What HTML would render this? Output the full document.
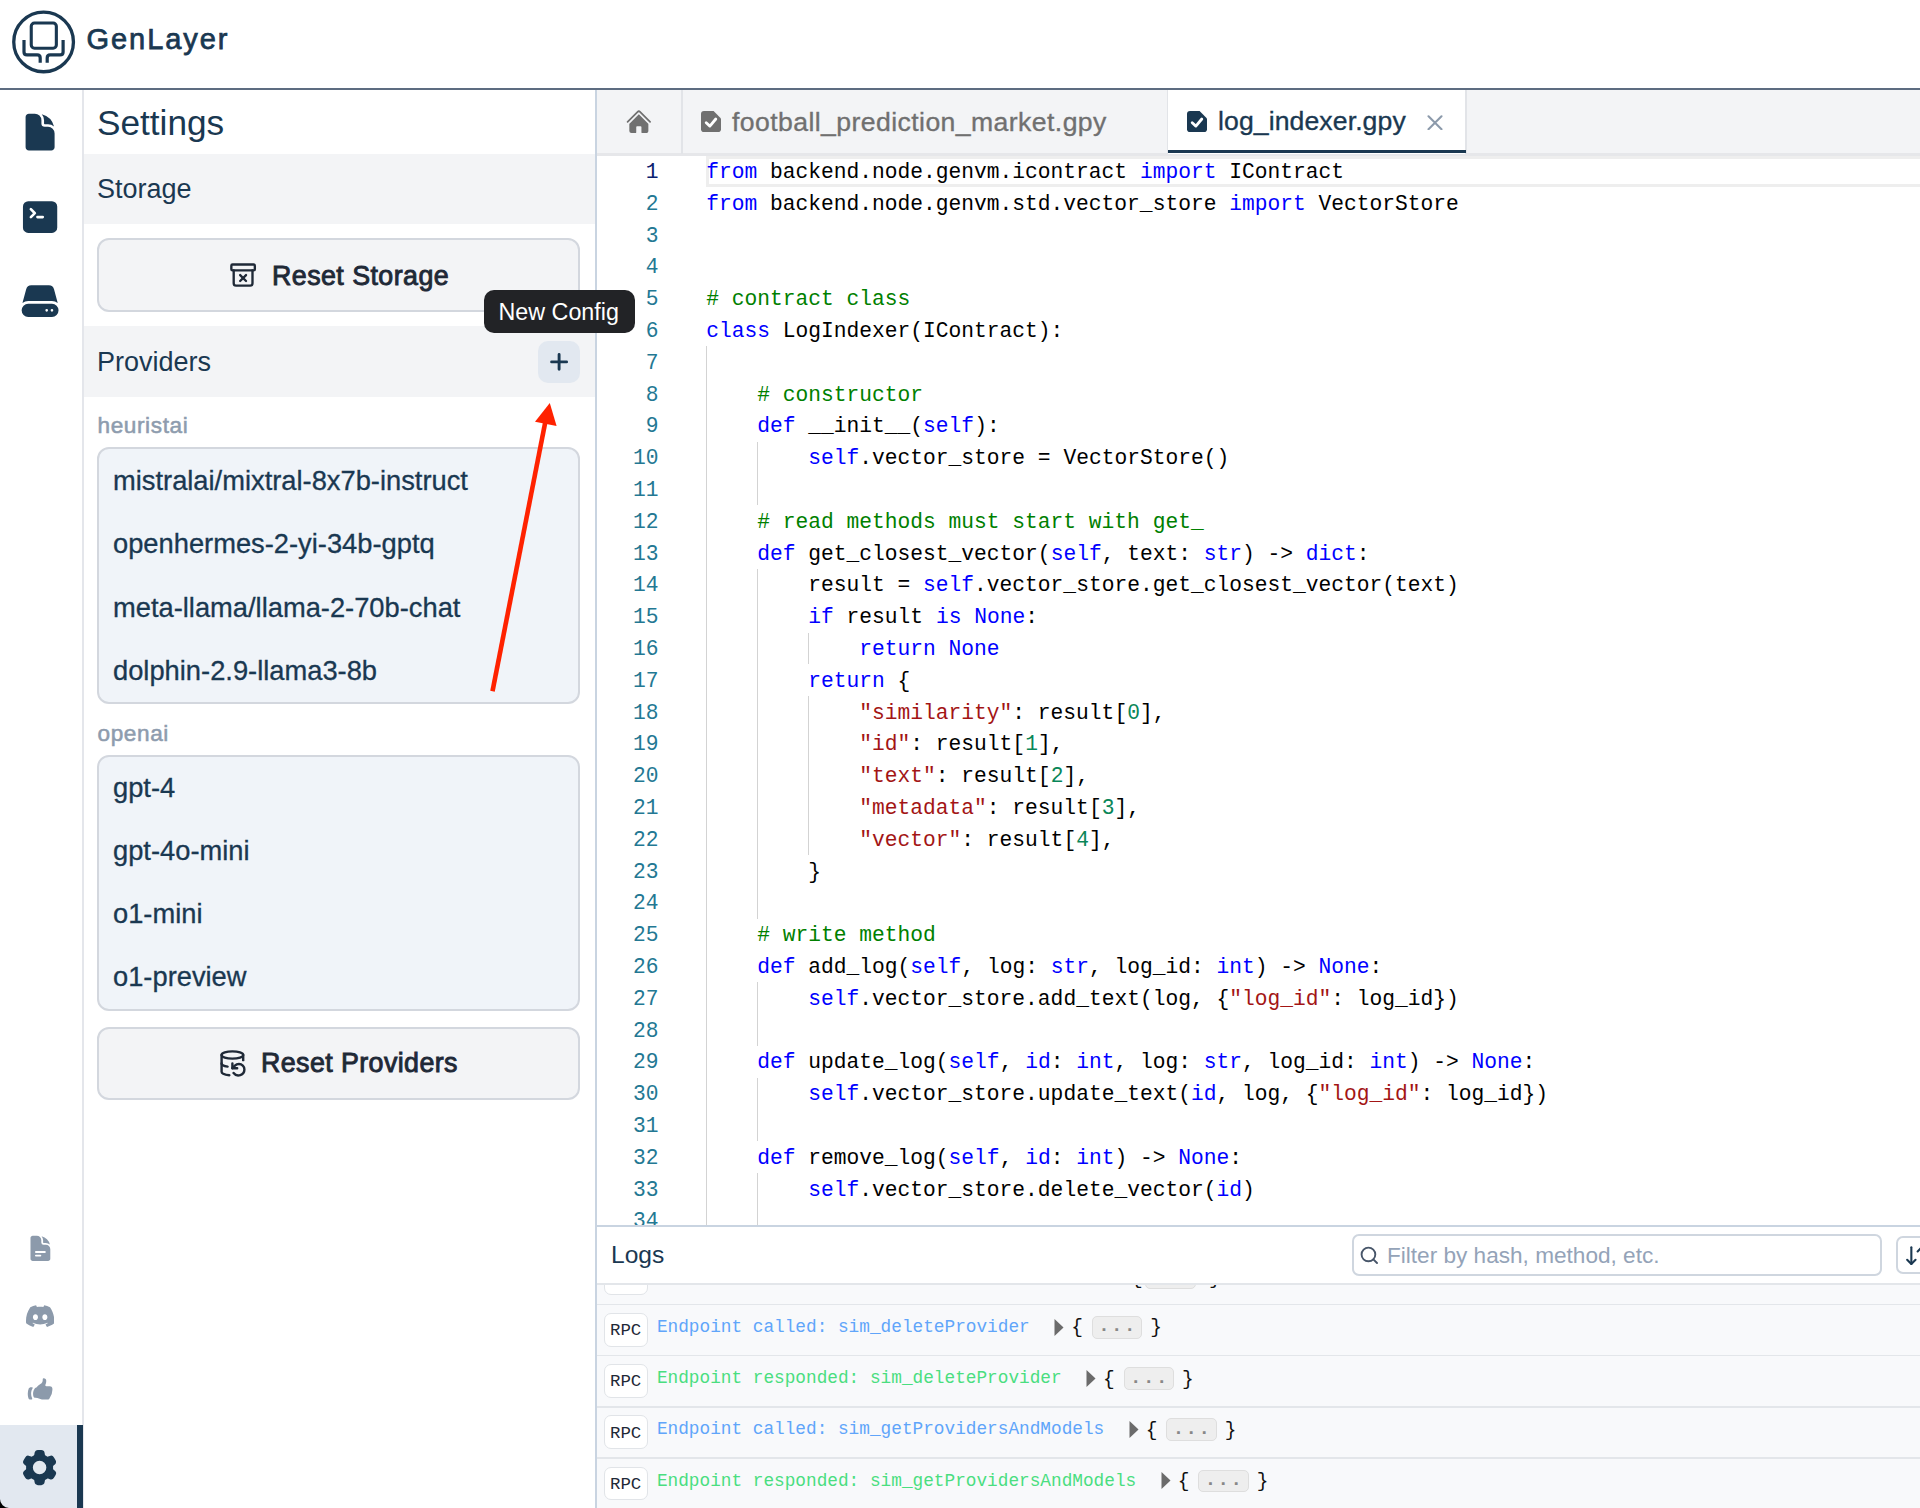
<!DOCTYPE html>
<html><head><meta charset="utf-8"><title>GenLayer Studio</title>
<style>
html,body{margin:0;padding:0;}
body{width:1920px;height:1508px;position:relative;overflow:hidden;background:#fff;font-family:"Liberation Sans", sans-serif;}
.a{position:absolute;}
.t{position:absolute;white-space:pre;line-height:1;}
.s{font-family:"Liberation Sans", sans-serif;}
.m{font-family:"Liberation Mono", monospace;}
</style></head><body>
<div class="a" style="left:0px;top:0px;width:1920px;height:88px;background:#fff;"></div>
<div class="a" style="left:0px;top:88px;width:1920px;height:2px;background:#5d6c81;"></div>
<svg class="a" style="left:0;top:0" width="90" height="88" viewBox="0 0 90 88" fill="none" stroke="#1a3851">
<circle cx="43.6" cy="41.9" r="29.85" stroke-width="3.3"/>
<rect x="31.25" y="23.05" width="25.1" height="25.15" rx="3.2" stroke-width="3.1"/>
<path d="M24 39.9 V51.9 q0 3 3 3 H37.2 q3 0 3 3 V62.8" stroke-width="3.2"/>
<path d="M63.1 39.9 V51.9 q0 3 -3 3 H50.2 q-3 0 -3 3 V62.8" stroke-width="3.2"/>
</svg>
<div class="t s" style="left:86.50px;top:24.85px;font-size:29.00px;color:#1a3851;letter-spacing:1.95px;-webkit-text-stroke:0.75px #1a3851;">GenLayer</div>
<div class="a" style="left:82px;top:90px;width:1.5px;height:1418px;background:#e4e6eb;"></div>
<svg class="a" style="left:18.8px;top:111.4px" width="42.2" height="42.2" viewBox="0 0 24 24" fill="#1a3851"><path d="M5.625 1.5c-1.036 0-1.875.84-1.875 1.875v17.25c0 1.035.84 1.875 1.875 1.875h12.75c1.035 0 1.875-.84 1.875-1.875V12.75A3.75 3.75 0 0 0 16.5 9h-1.875a1.875 1.875 0 0 1-1.875-1.875V5.25A3.75 3.75 0 0 0 9 1.5H5.625Z"/><path d="M12.971 1.816A5.23 5.23 0 0 1 14.25 5.25v1.875c0 .207.168.375.375.375H16.5a5.23 5.23 0 0 1 3.434 1.279 9.768 9.768 0 0 0-6.963-6.963Z"/></svg>
<svg class="a" style="left:18.8px;top:195.7px" width="42.2" height="42.2" viewBox="0 0 24 24" fill="#1a3851"><path fill-rule="evenodd" d="M2.25 6a3 3 0 0 1 3-3h13.5a3 3 0 0 1 3 3v12a3 3 0 0 1-3 3H5.25a3 3 0 0 1-3-3V6Zm3.97.97a.75.75 0 0 1 1.06 0l2.25 2.25a.75.75 0 0 1 0 1.06l-2.25 2.25a.75.75 0 0 1-1.06-1.06l1.72-1.72-1.72-1.72a.75.75 0 0 1 0-1.06Zm4.28 4.28a.75.75 0 0 0 0 1.5h3a.75.75 0 0 0 0-1.5h-3Z" clip-rule="evenodd"/></svg>
<svg class="a" style="left:18.8px;top:280.3px" width="42.2" height="42.2" viewBox="0 0 24 24" fill="#1a3851"><path d="M4.08 5.227A3 3 0 0 1 6.979 3H17.02a3 3 0 0 1 2.9 2.227l2.113 7.926A5.228 5.228 0 0 0 18.75 12H5.25a5.228 5.228 0 0 0-3.284 1.153L4.08 5.227Z"/><path fill-rule="evenodd" d="M5.25 13.5a3.75 3.75 0 1 0 0 7.5h13.5a3.75 3.75 0 1 0 0-7.5H5.25Zm10.5 4.5a.75.75 0 1 0 0-1.5.75.75 0 0 0 0 1.5Zm3.75-.75a.75.75 0 1 1-1.5 0 .75.75 0 0 1 1.5 0Z" clip-rule="evenodd"/></svg>
<svg class="a" style="left:25.5px;top:1234.2px" width="28.8" height="28.8" viewBox="0 0 24 24" fill="#8c9aab"><path fill-rule="evenodd" d="M5.625 1.5c-1.036 0-1.875.84-1.875 1.875v17.25c0 1.035.84 1.875 1.875 1.875h12.75c1.035 0 1.875-.84 1.875-1.875V12.75A3.75 3.75 0 0 0 16.5 9h-1.875a1.875 1.875 0 0 1-1.875-1.875V5.25A3.75 3.75 0 0 0 9 1.5H5.625ZM7.5 15a.75.75 0 0 1 .75-.75h7.5a.75.75 0 0 1 0 1.5h-7.5A.75.75 0 0 1 7.5 15Zm.75 2.25a.75.75 0 0 0 0 1.5H12a.75.75 0 0 0 0-1.5H8.25Z" clip-rule="evenodd"/><path d="M12.971 1.816A5.23 5.23 0 0 1 14.25 5.25v1.875c0 .207.168.375.375.375H16.5a5.23 5.23 0 0 1 3.434 1.279 9.768 9.768 0 0 0-6.963-6.963Z"/></svg>
<svg class="a" style="left:25.7px;top:1301.6px" width="28.3" height="28.3" viewBox="0 0 24 24" fill="#8c9aab"><path d="M20.317 4.3698a19.7913 19.7913 0 00-4.8851-1.5152.0741.0741 0 00-.0785.0371c-.211.3753-.4447.8648-.6083 1.2495-1.8447-.2762-3.68-.2762-5.4868 0-.1636-.3933-.4058-.8742-.6177-1.2495a.077.077 0 00-.0785-.037 19.7363 19.7363 0 00-4.8852 1.515.0699.0699 0 00-.0321.0277C.5334 9.0458-.319 13.5799.0992 18.0578a.0824.0824 0 00.0312.0561c2.0528 1.5076 4.0413 2.4228 5.9929 3.0294a.0777.0777 0 00.0842-.0276c.4616-.6304.8731-1.2952 1.226-1.9942a.076.076 0 00-.0416-.1057c-.6528-.2476-1.2743-.5495-1.8722-.8923a.077.077 0 01-.0076-.1277c.1258-.0943.2517-.1923.3718-.2914a.0743.0743 0 01.0776-.0105c3.9278 1.7933 8.18 1.7933 12.0614 0a.0739.0739 0 01.0785.0095c.1202.099.246.1981.3728.2924a.077.077 0 01-.0066.1276 12.2986 12.2986 0 01-1.873.8914.0766.0766 0 00-.0407.1067c.3604.698.7719 1.3628 1.225 1.9932a.076.076 0 00.0842.0286c1.961-.6067 3.9495-1.5219 6.0023-3.0294a.077.077 0 00.0313-.0552c.5004-5.177-.8382-9.6739-3.5485-13.6604a.061.061 0 00-.0312-.0286zM8.02 15.3312c-1.1825 0-2.1569-1.0857-2.1569-2.419 0-1.3332.9555-2.4189 2.157-2.4189 1.2108 0 2.1757 1.0952 2.1568 2.419 0 1.3332-.9555 2.4189-2.1569 2.4189zm7.9748 0c-1.1825 0-2.1569-1.0857-2.1569-2.419 0-1.3332.9554-2.4189 2.1569-2.4189 1.2108 0 2.1757 1.0952 2.1568 2.419 0 1.3332-.946 2.4189-2.1568 2.4189Z"/></svg>
<svg class="a" style="left:25.5px;top:1375.6px" width="28.2" height="28.2" viewBox="0 0 24 24" fill="#8c9aab"><path d="M7.493 18.5c-.425 0-.82-.236-.975-.632A7.48 7.48 0 0 1 6 15.125c0-1.75.599-3.358 1.602-4.634.151-.192.373-.309.6-.397.473-.183.89-.514 1.212-.924a9.042 9.042 0 0 1 2.861-2.4c.723-.384 1.35-.956 1.653-1.715a4.498 4.498 0 0 0 .322-1.672V2.75A.75.75 0 0 1 15 2a2.25 2.25 0 0 1 2.25 2.25c0 1.152-.26 2.243-.723 3.218-.266.558.107 1.282.725 1.282h3.126c1.026 0 1.945.694 2.054 1.715.045.422.068.85.068 1.285a11.95 11.95 0 0 1-2.649 7.521c-.388.482-.987.729-1.605.729H14.23c-.483 0-.964-.078-1.423-.23l-3.114-1.04a4.501 4.501 0 0 0-1.423-.23h-.777ZM2.331 10.727a11.969 11.969 0 0 0-.831 4.398 12 12 0 0 0 .52 3.507C2.26 19.415 3.01 20 3.832 20H4.74c.445 0 .72-.498.523-.898a8.963 8.963 0 0 1-.924-3.977c0-1.708.476-3.305 1.302-4.666.245-.403-.028-.959-.5-.959H4.25c-.832 0-1.612.453-1.918 1.227Z"/></svg>
<div class="a" style="left:0px;top:1425px;width:77px;height:83px;background:#e2e8f0;"></div>
<div class="a" style="left:77px;top:1425px;width:5.5px;height:83px;background:#1a3851;"></div>
<svg class="a" style="left:18.2px;top:1446px" width="43.2" height="43.2" viewBox="0 0 24 24" fill="#1a3851"><path fill-rule="evenodd" d="M11.078 2.25c-.917 0-1.699.663-1.85 1.567L9.05 4.889c-.02.12-.115.26-.297.348a7.493 7.493 0 0 0-.986.57c-.166.115-.334.126-.45.083L6.3 5.508a1.875 1.875 0 0 0-2.282.819l-.922 1.597a1.875 1.875 0 0 0 .432 2.385l.84.692c.095.078.17.229.154.43a7.598 7.598 0 0 0 0 1.139c.015.2-.059.352-.153.43l-.841.692a1.875 1.875 0 0 0-.432 2.385l.922 1.597a1.875 1.875 0 0 0 2.282.818l1.019-.382c.115-.043.283-.031.45.082.312.214.641.405.985.57.182.088.277.228.297.35l.178 1.071c.151.904.933 1.567 1.85 1.567h1.844c.916 0 1.699-.663 1.85-1.567l.178-1.072c.02-.12.114-.26.297-.349.344-.165.673-.356.985-.57.167-.114.335-.125.45-.082l1.02.382a1.875 1.875 0 0 0 2.28-.819l.923-1.597a1.875 1.875 0 0 0-.432-2.385l-.84-.692c-.095-.078-.17-.229-.154-.43a7.614 7.614 0 0 0 0-1.139c-.016-.2.059-.352.153-.43l.84-.692c.708-.582.891-1.59.433-2.385l-.922-1.597a1.875 1.875 0 0 0-2.282-.818l-1.02.382c-.114.043-.282.031-.449-.083a7.49 7.49 0 0 0-.985-.57c-.183-.087-.277-.227-.297-.348l-.179-1.072a1.875 1.875 0 0 0-1.85-1.567h-1.843ZM12 15.75a3.75 3.75 0 1 0 0-7.5 3.75 3.75 0 0 0 0 7.5Z" clip-rule="evenodd"/></svg>
<div class="a" style="left:595px;top:90px;width:1.5px;height:1418px;background:#c9d4e1;"></div>
<div class="t s" style="left:97.00px;top:105.20px;font-size:35.20px;color:#1a3851;">Settings</div>
<div class="a" style="left:83.5px;top:153.5px;width:511.5px;height:70.5px;background:#f3f4f6;"></div>
<div class="t s" style="left:97.00px;top:176.44px;font-size:27.00px;color:#1a3851;">Storage</div>
<div class="a" style="left:97px;top:238px;width:483px;height:74px;background:#f3f4f6;border:2px solid #d3d7de;border-radius:12px;box-sizing:border-box;"></div>
<svg class="a" style="left:228.7px;top:261.2px" width="28.2" height="28.2" viewBox="0 0 24 24" fill="none" stroke="#1f2937" stroke-width="2" stroke-linecap="round" stroke-linejoin="round"><rect width="20" height="5" x="2" y="3" rx="1"/><path d="M4 8v11a2 2 0 0 0 2 2h12a2 2 0 0 0 2-2V8"/><path d="m9.5 17 5-5"/><path d="m9.5 12 5 5"/></svg>
<div class="t s" style="left:272.00px;top:262.91px;font-size:26.80px;color:#1f2937;letter-spacing:0.45px;-webkit-text-stroke:0.9px #1f2937;">Reset Storage</div>
<div class="a" style="left:83.5px;top:326px;width:511.5px;height:71px;background:#f3f4f6;"></div>
<div class="t s" style="left:97.00px;top:349.44px;font-size:27.00px;color:#1a3851;">Providers</div>
<div class="a" style="left:538px;top:341px;width:42px;height:42px;background:#e2e8f0;border-radius:10px;"></div>
<svg class="a" style="left:538px;top:341px" width="42" height="42" viewBox="0 0 42 42" stroke="#1a3851" stroke-width="2.9" stroke-linecap="round"><path d="M21.1 13.5 V28.3 M13.6 20.9 H28.6"/></svg>
<div class="t s" style="left:97.50px;top:415.16px;font-size:22.60px;color:#8e9cae;letter-spacing:0.6px;-webkit-text-stroke:0.55px #8e9cae;">heuristai</div>
<div class="a" style="left:97px;top:447px;width:483px;height:257px;background:#f0f4f9;border:2px solid #d3d7de;border-radius:12px;box-sizing:border-box;"></div>
<div class="t s" style="left:113.00px;top:466.69px;font-size:27.30px;color:#1a3851;-webkit-text-stroke:0.3px #1a3851;">mistralai/mixtral-8x7b-instruct</div>
<div class="t s" style="left:113.00px;top:530.29px;font-size:27.30px;color:#1a3851;-webkit-text-stroke:0.3px #1a3851;">openhermes-2-yi-34b-gptq</div>
<div class="t s" style="left:113.00px;top:593.89px;font-size:27.30px;color:#1a3851;-webkit-text-stroke:0.3px #1a3851;">meta-llama/llama-2-70b-chat</div>
<div class="t s" style="left:113.00px;top:657.49px;font-size:27.30px;color:#1a3851;-webkit-text-stroke:0.3px #1a3851;">dolphin-2.9-llama3-8b</div>
<div class="t s" style="left:97.50px;top:722.66px;font-size:22.60px;color:#8e9cae;letter-spacing:0.6px;-webkit-text-stroke:0.55px #8e9cae;">openai</div>
<div class="a" style="left:97px;top:755px;width:483px;height:256px;background:#f0f4f9;border:2px solid #d3d7de;border-radius:12px;box-sizing:border-box;"></div>
<div class="t s" style="left:113.00px;top:773.79px;font-size:27.30px;color:#1a3851;-webkit-text-stroke:0.3px #1a3851;">gpt-4</div>
<div class="t s" style="left:113.00px;top:836.99px;font-size:27.30px;color:#1a3851;-webkit-text-stroke:0.3px #1a3851;">gpt-4o-mini</div>
<div class="t s" style="left:113.00px;top:900.19px;font-size:27.30px;color:#1a3851;-webkit-text-stroke:0.3px #1a3851;">o1-mini</div>
<div class="t s" style="left:113.00px;top:963.39px;font-size:27.30px;color:#1a3851;-webkit-text-stroke:0.3px #1a3851;">o1-preview</div>
<div class="a" style="left:97px;top:1026.5px;width:483px;height:73px;background:#f3f4f6;border:2px solid #d3d7de;border-radius:12px;box-sizing:border-box;"></div>
<svg class="a" style="left:217.7px;top:1048.7px" width="28.8" height="28.8" viewBox="0 0 24 24" fill="none" stroke="#1f2937" stroke-width="2" stroke-linecap="round" stroke-linejoin="round"><ellipse cx="12" cy="5" rx="9" ry="3"/><path d="M3 12a9 3 0 0 0 5 2.69"/><path d="M21 9.3V5"/><path d="M3 5v14a9 3 0 0 0 6.47 2.88"/><path d="M12 12v4h4"/><path d="M13 20a5 5 0 0 0 9-3 4.5 4.5 0 0 0-4.5-4.5c-1.33 0-2.54.54-3.41 1.41L12 16"/></svg>
<div class="t s" style="left:261.00px;top:1049.61px;font-size:26.80px;color:#1f2937;letter-spacing:0.42px;-webkit-text-stroke:0.9px #1f2937;">Reset Providers</div>
<div class="a" style="left:596.5px;top:90px;width:1323.5px;height:63.5px;background:#f3f4f6;"></div>
<div class="a" style="left:596.5px;top:153px;width:1323.5px;height:2.5px;background:#e6e7ea;"></div>
<svg class="a" style="left:624.6px;top:107.8px" width="27.7" height="27.7" viewBox="0 0 24 24" fill="#707070"><path d="M11.47 3.841a.75.75 0 0 1 1.06 0l8.69 8.69a.75.75 0 1 0 1.06-1.061l-8.689-8.69a2.25 2.25 0 0 0-3.182 0l-8.69 8.69a.75.75 0 1 0 1.061 1.06l8.69-8.689Z"/><path d="m12 5.432 8.159 8.159c.03.03.06.058.091.086v6.198c0 1.035-.84 1.875-1.875 1.875H15a.75.75 0 0 1-.75-.75v-4.5a.75.75 0 0 0-.75-.75h-3a.75.75 0 0 0-.75.75V21a.75.75 0 0 1-.75.75H5.625a1.875 1.875 0 0 1-1.875-1.875v-6.198a2.29 2.29 0 0 0 .091-.086L12 5.432Z"/></svg>
<div class="a" style="left:681px;top:90px;width:1.5px;height:63.5px;background:#e2e4e8;"></div>
<div class="a" style="left:1166.5px;top:90px;width:1.5px;height:63.5px;background:#e2e4e8;"></div>
<svg class="a" style="left:700.9px;top:111px" width="20" height="21.2" viewBox="0 0 20 21.2"><path d="M3 0 H12.6 L20 7.4 V18.2 Q20 21.2 17 21.2 H3 Q0 21.2 0 18.2 V3 Q0 0 3 0Z" fill="#707070"/><path d="M5.2 11.8 L8.9 15.1 L14.8 8" fill="none" stroke="#fff" stroke-width="2.8" stroke-linecap="round" stroke-linejoin="round"/></svg>
<div class="t s" style="left:732.00px;top:108.68px;font-size:26.60px;color:#707070;letter-spacing:0.42px;-webkit-text-stroke:0.35px #707070;">football_prediction_market.gpy</div>
<div class="a" style="left:1168px;top:90px;width:297.5px;height:63.5px;background:#fff;"></div>
<div class="a" style="left:1465px;top:90px;width:1.5px;height:63.5px;background:#e2e4e8;"></div>
<div class="a" style="left:1167.5px;top:149.7px;width:298px;height:3.6px;background:#1a3851;"></div>
<svg class="a" style="left:1186.8px;top:111px" width="20" height="21.2" viewBox="0 0 20 21.2"><path d="M3 0 H12.6 L20 7.4 V18.2 Q20 21.2 17 21.2 H3 Q0 21.2 0 18.2 V3 Q0 0 3 0Z" fill="#1a3851"/><path d="M5.2 11.8 L8.9 15.1 L14.8 8" fill="none" stroke="#fff" stroke-width="2.8" stroke-linecap="round" stroke-linejoin="round"/></svg>
<div class="t s" style="left:1218.00px;top:108.48px;font-size:26.60px;color:#1a3851;letter-spacing:0.1px;-webkit-text-stroke:0.35px #1a3851;">log_indexer.gpy</div>
<svg class="a" style="left:1427px;top:114.5px" width="16" height="15.5" viewBox="0 0 16 15.5" stroke="#8c9aab" stroke-width="2.1" stroke-linecap="round"><path d="M1.5 1.3 L14.5 14.2 M14.5 1.3 L1.5 14.2"/></svg>
<div class="a" style="left:596.5px;top:155.5px;width:1323.5px;height:1069.5px;overflow:hidden;">
<div class="a" style="left:109.5px;top:0.0px;width:1214px;height:31.5px;box-sizing:border-box;border:3px solid #eeeeee;border-right:none;"></div>
<div class="a" style="left:109.0px;top:190.8px;width:1.6px;height:890.4px;background:#d3d3d3;"></div>
<div class="a" style="left:160.0px;top:286.2px;width:1.6px;height:63.6px;background:#d3d3d3;"></div>
<div class="a" style="left:160.0px;top:413.4px;width:1.6px;height:349.8px;background:#d3d3d3;"></div>
<div class="a" style="left:160.0px;top:826.8px;width:1.6px;height:63.6px;background:#d3d3d3;"></div>
<div class="a" style="left:160.0px;top:922.2px;width:1.6px;height:63.6px;background:#d3d3d3;"></div>
<div class="a" style="left:160.0px;top:1017.6px;width:1.6px;height:63.6px;background:#d3d3d3;"></div>
<div class="a" style="left:211.0px;top:477.0px;width:1.6px;height:31.8px;background:#d3d3d3;"></div>
<div class="a" style="left:211.0px;top:540.6px;width:1.6px;height:159.0px;background:#d3d3d3;"></div>
<div class="t m" style="left:49.35px;top:6.52px;font-size:21.25px;color:#0b216f;">1</div>
<div class="t m" style="left:109.80px;top:6.52px;font-size:21.25px;color:#000000;"><span style="color:#0000ff">from</span> backend.node.genvm.icontract <span style="color:#0000ff">import</span> IContract</div>
<div class="t m" style="left:49.35px;top:38.32px;font-size:21.25px;color:#237893;">2</div>
<div class="t m" style="left:109.80px;top:38.32px;font-size:21.25px;color:#000000;"><span style="color:#0000ff">from</span> backend.node.genvm.std.vector_store <span style="color:#0000ff">import</span> VectorStore</div>
<div class="t m" style="left:49.35px;top:70.12px;font-size:21.25px;color:#237893;">3</div>
<div class="t m" style="left:49.35px;top:101.92px;font-size:21.25px;color:#237893;">4</div>
<div class="t m" style="left:49.35px;top:133.72px;font-size:21.25px;color:#237893;">5</div>
<div class="t m" style="left:109.80px;top:133.72px;font-size:21.25px;color:#000000;"><span style="color:#008000"># contract class</span></div>
<div class="t m" style="left:49.35px;top:165.52px;font-size:21.25px;color:#237893;">6</div>
<div class="t m" style="left:109.80px;top:165.52px;font-size:21.25px;color:#000000;"><span style="color:#0000ff">class</span> LogIndexer(IContract):</div>
<div class="t m" style="left:49.35px;top:197.32px;font-size:21.25px;color:#237893;">7</div>
<div class="t m" style="left:49.35px;top:229.12px;font-size:21.25px;color:#237893;">8</div>
<div class="t m" style="left:109.80px;top:229.12px;font-size:21.25px;color:#000000;">&nbsp;&nbsp;&nbsp;&nbsp;<span style="color:#008000"># constructor</span></div>
<div class="t m" style="left:49.35px;top:260.92px;font-size:21.25px;color:#237893;">9</div>
<div class="t m" style="left:109.80px;top:260.92px;font-size:21.25px;color:#000000;">&nbsp;&nbsp;&nbsp;&nbsp;<span style="color:#0000ff">def</span> __init__(<span style="color:#0000ff">self</span>):</div>
<div class="t m" style="left:36.60px;top:292.72px;font-size:21.25px;color:#237893;">10</div>
<div class="t m" style="left:109.80px;top:292.72px;font-size:21.25px;color:#000000;">&nbsp;&nbsp;&nbsp;&nbsp;&nbsp;&nbsp;&nbsp;&nbsp;<span style="color:#0000ff">self</span>.vector_store = VectorStore()</div>
<div class="t m" style="left:36.60px;top:324.52px;font-size:21.25px;color:#237893;">11</div>
<div class="t m" style="left:36.60px;top:356.32px;font-size:21.25px;color:#237893;">12</div>
<div class="t m" style="left:109.80px;top:356.32px;font-size:21.25px;color:#000000;">&nbsp;&nbsp;&nbsp;&nbsp;<span style="color:#008000"># read methods must start with get_</span></div>
<div class="t m" style="left:36.60px;top:388.12px;font-size:21.25px;color:#237893;">13</div>
<div class="t m" style="left:109.80px;top:388.12px;font-size:21.25px;color:#000000;">&nbsp;&nbsp;&nbsp;&nbsp;<span style="color:#0000ff">def</span> get_closest_vector(<span style="color:#0000ff">self</span>, text: <span style="color:#0000ff">str</span>) -&gt; <span style="color:#0000ff">dict</span>:</div>
<div class="t m" style="left:36.60px;top:419.92px;font-size:21.25px;color:#237893;">14</div>
<div class="t m" style="left:109.80px;top:419.92px;font-size:21.25px;color:#000000;">&nbsp;&nbsp;&nbsp;&nbsp;&nbsp;&nbsp;&nbsp;&nbsp;result = <span style="color:#0000ff">self</span>.vector_store.get_closest_vector(text)</div>
<div class="t m" style="left:36.60px;top:451.72px;font-size:21.25px;color:#237893;">15</div>
<div class="t m" style="left:109.80px;top:451.72px;font-size:21.25px;color:#000000;">&nbsp;&nbsp;&nbsp;&nbsp;&nbsp;&nbsp;&nbsp;&nbsp;<span style="color:#0000ff">if</span> result <span style="color:#0000ff">is</span> <span style="color:#0000ff">None</span>:</div>
<div class="t m" style="left:36.60px;top:483.52px;font-size:21.25px;color:#237893;">16</div>
<div class="t m" style="left:109.80px;top:483.52px;font-size:21.25px;color:#000000;">&nbsp;&nbsp;&nbsp;&nbsp;&nbsp;&nbsp;&nbsp;&nbsp;&nbsp;&nbsp;&nbsp;&nbsp;<span style="color:#0000ff">return</span> <span style="color:#0000ff">None</span></div>
<div class="t m" style="left:36.60px;top:515.32px;font-size:21.25px;color:#237893;">17</div>
<div class="t m" style="left:109.80px;top:515.32px;font-size:21.25px;color:#000000;">&nbsp;&nbsp;&nbsp;&nbsp;&nbsp;&nbsp;&nbsp;&nbsp;<span style="color:#0000ff">return</span> {</div>
<div class="t m" style="left:36.60px;top:547.12px;font-size:21.25px;color:#237893;">18</div>
<div class="t m" style="left:109.80px;top:547.12px;font-size:21.25px;color:#000000;">&nbsp;&nbsp;&nbsp;&nbsp;&nbsp;&nbsp;&nbsp;&nbsp;&nbsp;&nbsp;&nbsp;&nbsp;<span style="color:#a31515">&quot;similarity&quot;</span>: result[<span style="color:#098658">0</span>],</div>
<div class="t m" style="left:36.60px;top:578.92px;font-size:21.25px;color:#237893;">19</div>
<div class="t m" style="left:109.80px;top:578.92px;font-size:21.25px;color:#000000;">&nbsp;&nbsp;&nbsp;&nbsp;&nbsp;&nbsp;&nbsp;&nbsp;&nbsp;&nbsp;&nbsp;&nbsp;<span style="color:#a31515">&quot;id&quot;</span>: result[<span style="color:#098658">1</span>],</div>
<div class="t m" style="left:36.60px;top:610.72px;font-size:21.25px;color:#237893;">20</div>
<div class="t m" style="left:109.80px;top:610.72px;font-size:21.25px;color:#000000;">&nbsp;&nbsp;&nbsp;&nbsp;&nbsp;&nbsp;&nbsp;&nbsp;&nbsp;&nbsp;&nbsp;&nbsp;<span style="color:#a31515">&quot;text&quot;</span>: result[<span style="color:#098658">2</span>],</div>
<div class="t m" style="left:36.60px;top:642.52px;font-size:21.25px;color:#237893;">21</div>
<div class="t m" style="left:109.80px;top:642.52px;font-size:21.25px;color:#000000;">&nbsp;&nbsp;&nbsp;&nbsp;&nbsp;&nbsp;&nbsp;&nbsp;&nbsp;&nbsp;&nbsp;&nbsp;<span style="color:#a31515">&quot;metadata&quot;</span>: result[<span style="color:#098658">3</span>],</div>
<div class="t m" style="left:36.60px;top:674.32px;font-size:21.25px;color:#237893;">22</div>
<div class="t m" style="left:109.80px;top:674.32px;font-size:21.25px;color:#000000;">&nbsp;&nbsp;&nbsp;&nbsp;&nbsp;&nbsp;&nbsp;&nbsp;&nbsp;&nbsp;&nbsp;&nbsp;<span style="color:#a31515">&quot;vector&quot;</span>: result[<span style="color:#098658">4</span>],</div>
<div class="t m" style="left:36.60px;top:706.12px;font-size:21.25px;color:#237893;">23</div>
<div class="t m" style="left:109.80px;top:706.12px;font-size:21.25px;color:#000000;">&nbsp;&nbsp;&nbsp;&nbsp;&nbsp;&nbsp;&nbsp;&nbsp;}</div>
<div class="t m" style="left:36.60px;top:737.92px;font-size:21.25px;color:#237893;">24</div>
<div class="t m" style="left:36.60px;top:769.72px;font-size:21.25px;color:#237893;">25</div>
<div class="t m" style="left:109.80px;top:769.72px;font-size:21.25px;color:#000000;">&nbsp;&nbsp;&nbsp;&nbsp;<span style="color:#008000"># write method</span></div>
<div class="t m" style="left:36.60px;top:801.52px;font-size:21.25px;color:#237893;">26</div>
<div class="t m" style="left:109.80px;top:801.52px;font-size:21.25px;color:#000000;">&nbsp;&nbsp;&nbsp;&nbsp;<span style="color:#0000ff">def</span> add_log(<span style="color:#0000ff">self</span>, log: <span style="color:#0000ff">str</span>, log_id: <span style="color:#0000ff">int</span>) -&gt; <span style="color:#0000ff">None</span>:</div>
<div class="t m" style="left:36.60px;top:833.32px;font-size:21.25px;color:#237893;">27</div>
<div class="t m" style="left:109.80px;top:833.32px;font-size:21.25px;color:#000000;">&nbsp;&nbsp;&nbsp;&nbsp;&nbsp;&nbsp;&nbsp;&nbsp;<span style="color:#0000ff">self</span>.vector_store.add_text(log, {<span style="color:#a31515">&quot;log_id&quot;</span>: log_id})</div>
<div class="t m" style="left:36.60px;top:865.12px;font-size:21.25px;color:#237893;">28</div>
<div class="t m" style="left:36.60px;top:896.92px;font-size:21.25px;color:#237893;">29</div>
<div class="t m" style="left:109.80px;top:896.92px;font-size:21.25px;color:#000000;">&nbsp;&nbsp;&nbsp;&nbsp;<span style="color:#0000ff">def</span> update_log(<span style="color:#0000ff">self</span>, <span style="color:#0000ff">id</span>: <span style="color:#0000ff">int</span>, log: <span style="color:#0000ff">str</span>, log_id: <span style="color:#0000ff">int</span>) -&gt; <span style="color:#0000ff">None</span>:</div>
<div class="t m" style="left:36.60px;top:928.72px;font-size:21.25px;color:#237893;">30</div>
<div class="t m" style="left:109.80px;top:928.72px;font-size:21.25px;color:#000000;">&nbsp;&nbsp;&nbsp;&nbsp;&nbsp;&nbsp;&nbsp;&nbsp;<span style="color:#0000ff">self</span>.vector_store.update_text(<span style="color:#0000ff">id</span>, log, {<span style="color:#a31515">&quot;log_id&quot;</span>: log_id})</div>
<div class="t m" style="left:36.60px;top:960.52px;font-size:21.25px;color:#237893;">31</div>
<div class="t m" style="left:36.60px;top:992.32px;font-size:21.25px;color:#237893;">32</div>
<div class="t m" style="left:109.80px;top:992.32px;font-size:21.25px;color:#000000;">&nbsp;&nbsp;&nbsp;&nbsp;<span style="color:#0000ff">def</span> remove_log(<span style="color:#0000ff">self</span>, <span style="color:#0000ff">id</span>: <span style="color:#0000ff">int</span>) -&gt; <span style="color:#0000ff">None</span>:</div>
<div class="t m" style="left:36.60px;top:1024.12px;font-size:21.25px;color:#237893;">33</div>
<div class="t m" style="left:109.80px;top:1024.12px;font-size:21.25px;color:#000000;">&nbsp;&nbsp;&nbsp;&nbsp;&nbsp;&nbsp;&nbsp;&nbsp;<span style="color:#0000ff">self</span>.vector_store.delete_vector(<span style="color:#0000ff">id</span>)</div>
<div class="t m" style="left:36.60px;top:1055.92px;font-size:21.25px;color:#237893;">34</div>
</div>
<div class="a" style="left:596.5px;top:1225px;width:1323.5px;height:2px;background:#c9d4e1;"></div>
<div class="a" style="left:596.5px;top:1227px;width:1323.5px;height:56.3px;background:#fff;"></div>
<div class="t s" style="left:611.00px;top:1242.97px;font-size:24.60px;color:#1a3851;">Logs</div>
<div class="a" style="left:1352px;top:1234px;width:530px;height:41.5px;box-sizing:border-box;border:2px solid #cfd6df;border-radius:7px;background:#fff;"></div>
<svg class="a" style="left:1359px;top:1245.3px" width="20.6" height="20.6" viewBox="0 0 24 24" fill="none" stroke="#475569" stroke-width="2.2" stroke-linecap="round"><circle cx="11" cy="11" r="8"/><path d="m21 21-4.3-4.3"/></svg>
<div class="t s" style="left:1387.00px;top:1245.26px;font-size:22.60px;color:#94a3b8;">Filter by hash, method, etc.</div>
<div class="a" style="left:1896px;top:1236px;width:40px;height:37.5px;box-sizing:border-box;border:2px solid #cfd6df;border-radius:7px;background:#fff;"></div>
<svg class="a" style="left:1904.25px;top:1243.4px" width="25.2" height="25.2" viewBox="0 0 24 24" fill="none" stroke="#1a3851" stroke-width="2" stroke-linecap="round" stroke-linejoin="round"><path d="m3 16 4 4 4-4"/><path d="M7 20V4"/><path d="m21 8-4-4-4 4"/><path d="M17 4v16"/></svg>
<div class="a" style="left:596.5px;top:1283.3px;width:1323.5px;height:224.7px;overflow:hidden;background:#f8f9fb;">
<div class="a" style="left:0px;top:0px;width:1323.5px;height:1.5px;background:#e3e6ea;"></div>
<div class="a" style="left:0px;top:-30.9px;width:1323.5px;height:1.6px;background:#e3e6ea;"></div>
<div class="a" style="left:7.2px;top:-21.5px;width:44.7px;height:33.6px;box-sizing:border-box;border:1.5px solid #e1e4e8;border-radius:7px;background:#fff;"></div>
<div class="t m" style="left:13.50px;top:-12.23px;font-size:17.40px;color:#1f2937;">RPC</div>
<div class="t m" style="left:534.50px;top:-13.54px;font-size:19.50px;color:#111;">{</div>
<div class="t m" style="left:612.50px;top:-13.54px;font-size:19.50px;color:#111;">}</div>
<div class="a" style="left:548.5px;top:-17.1px;width:50.8px;height:22.8px;box-sizing:border-box;border:1.5px solid #dedede;border-radius:5px;background:#eeeeee;"></div>
<div class="a" style="left:0px;top:20.3px;width:1323.5px;height:1.6px;background:#e3e6ea;"></div>
<div class="a" style="left:7.2px;top:29.7px;width:44.7px;height:33.6px;box-sizing:border-box;border:1.5px solid #e1e4e8;border-radius:7px;background:#fff;"></div>
<div class="t m" style="left:13.50px;top:38.97px;font-size:17.40px;color:#1f2937;">RPC</div>
<div class="t m" style="left:60.40px;top:35.80px;font-size:17.75px;color:#60a5fa;">Endpoint called: sim_deleteProvider</div>
<svg class="a" style="left:457.65px;top:35.50px" width="10" height="17" viewBox="0 0 10 17"><path d="M0.5 0 L9.5 8.5 L0.5 17Z" fill="#6b6b6b"/></svg>
<div class="t m" style="left:474.65px;top:36.16px;font-size:19.50px;color:#111;">{</div>
<div class="a" style="left:495.05px;top:32.7px;width:50.8px;height:22.8px;box-sizing:border-box;border:1.5px solid #dedede;border-radius:5px;background:#eeeeee;"></div>
<div class="t m" style="left:501.65px;top:34.04px;font-size:19.00px;color:#888;font-weight:bold;letter-spacing:1.5px;">...</div>
<div class="t m" style="left:553.65px;top:36.16px;font-size:19.50px;color:#111;">}</div>
<div class="a" style="left:0px;top:71.5px;width:1323.5px;height:1.6px;background:#e3e6ea;"></div>
<div class="a" style="left:7.2px;top:80.9px;width:44.7px;height:33.6px;box-sizing:border-box;border:1.5px solid #e1e4e8;border-radius:7px;background:#fff;"></div>
<div class="t m" style="left:13.50px;top:90.17px;font-size:17.40px;color:#1f2937;">RPC</div>
<div class="t m" style="left:60.40px;top:87.00px;font-size:17.75px;color:#4ade80;">Endpoint responded: sim_deleteProvider</div>
<svg class="a" style="left:489.60px;top:86.70px" width="10" height="17" viewBox="0 0 10 17"><path d="M0.5 0 L9.5 8.5 L0.5 17Z" fill="#6b6b6b"/></svg>
<div class="t m" style="left:506.60px;top:87.36px;font-size:19.50px;color:#111;">{</div>
<div class="a" style="left:527.0px;top:83.9px;width:50.8px;height:22.8px;box-sizing:border-box;border:1.5px solid #dedede;border-radius:5px;background:#eeeeee;"></div>
<div class="t m" style="left:533.60px;top:85.24px;font-size:19.00px;color:#888;font-weight:bold;letter-spacing:1.5px;">...</div>
<div class="t m" style="left:585.60px;top:87.36px;font-size:19.50px;color:#111;">}</div>
<div class="a" style="left:0px;top:122.7px;width:1323.5px;height:1.6px;background:#e3e6ea;"></div>
<div class="a" style="left:7.2px;top:132.1px;width:44.7px;height:33.6px;box-sizing:border-box;border:1.5px solid #e1e4e8;border-radius:7px;background:#fff;"></div>
<div class="t m" style="left:13.50px;top:141.37px;font-size:17.40px;color:#1f2937;">RPC</div>
<div class="t m" style="left:60.40px;top:138.20px;font-size:17.75px;color:#60a5fa;">Endpoint called: sim_getProvidersAndModels</div>
<svg class="a" style="left:532.20px;top:137.90px" width="10" height="17" viewBox="0 0 10 17"><path d="M0.5 0 L9.5 8.5 L0.5 17Z" fill="#6b6b6b"/></svg>
<div class="t m" style="left:549.20px;top:138.56px;font-size:19.50px;color:#111;">{</div>
<div class="a" style="left:569.6px;top:135.1px;width:50.8px;height:22.8px;box-sizing:border-box;border:1.5px solid #dedede;border-radius:5px;background:#eeeeee;"></div>
<div class="t m" style="left:576.20px;top:136.44px;font-size:19.00px;color:#888;font-weight:bold;letter-spacing:1.5px;">...</div>
<div class="t m" style="left:628.20px;top:138.56px;font-size:19.50px;color:#111;">}</div>
<div class="a" style="left:0px;top:173.9px;width:1323.5px;height:1.6px;background:#e3e6ea;"></div>
<div class="a" style="left:7.2px;top:183.3px;width:44.7px;height:33.6px;box-sizing:border-box;border:1.5px solid #e1e4e8;border-radius:7px;background:#fff;"></div>
<div class="t m" style="left:13.50px;top:192.57px;font-size:17.40px;color:#1f2937;">RPC</div>
<div class="t m" style="left:60.40px;top:189.40px;font-size:17.75px;color:#4ade80;">Endpoint responded: sim_getProvidersAndModels</div>
<svg class="a" style="left:564.15px;top:189.10px" width="10" height="17" viewBox="0 0 10 17"><path d="M0.5 0 L9.5 8.5 L0.5 17Z" fill="#6b6b6b"/></svg>
<div class="t m" style="left:581.15px;top:189.76px;font-size:19.50px;color:#111;">{</div>
<div class="a" style="left:601.55px;top:186.3px;width:50.8px;height:22.8px;box-sizing:border-box;border:1.5px solid #dedede;border-radius:5px;background:#eeeeee;"></div>
<div class="t m" style="left:608.15px;top:187.64px;font-size:19.00px;color:#888;font-weight:bold;letter-spacing:1.5px;">...</div>
<div class="t m" style="left:660.15px;top:189.76px;font-size:19.50px;color:#111;">}</div>
</div>
<div class="a" style="left:596.5px;top:1283.3px;width:1323.5px;height:1.6px;background:#e3e6ea;"></div>
<div class="a" style="left:484px;top:289.5px;width:151px;height:43px;background:#222326;border-radius:10px;"></div>
<div class="t s" style="left:498.50px;top:300.57px;font-size:23.30px;color:#ffffff;">New Config</div>
<svg class="a" style="left:0;top:0" width="600" height="720" viewBox="0 0 600 720"><path d="M492.5 691.25 L545.5 421" stroke="#ff2200" stroke-width="4.6" fill="none"/><path d="M549.8 402.9 L535 421.7 L556.6 426.1Z" fill="#ff2200"/></svg>
<svg class="a" style="left:0;top:1488px" width="20" height="20" viewBox="0 0 20 20"><path d="M0 11 A9 9 0 0 0 9 20 H0Z" fill="#000"/></svg>

</body></html>
